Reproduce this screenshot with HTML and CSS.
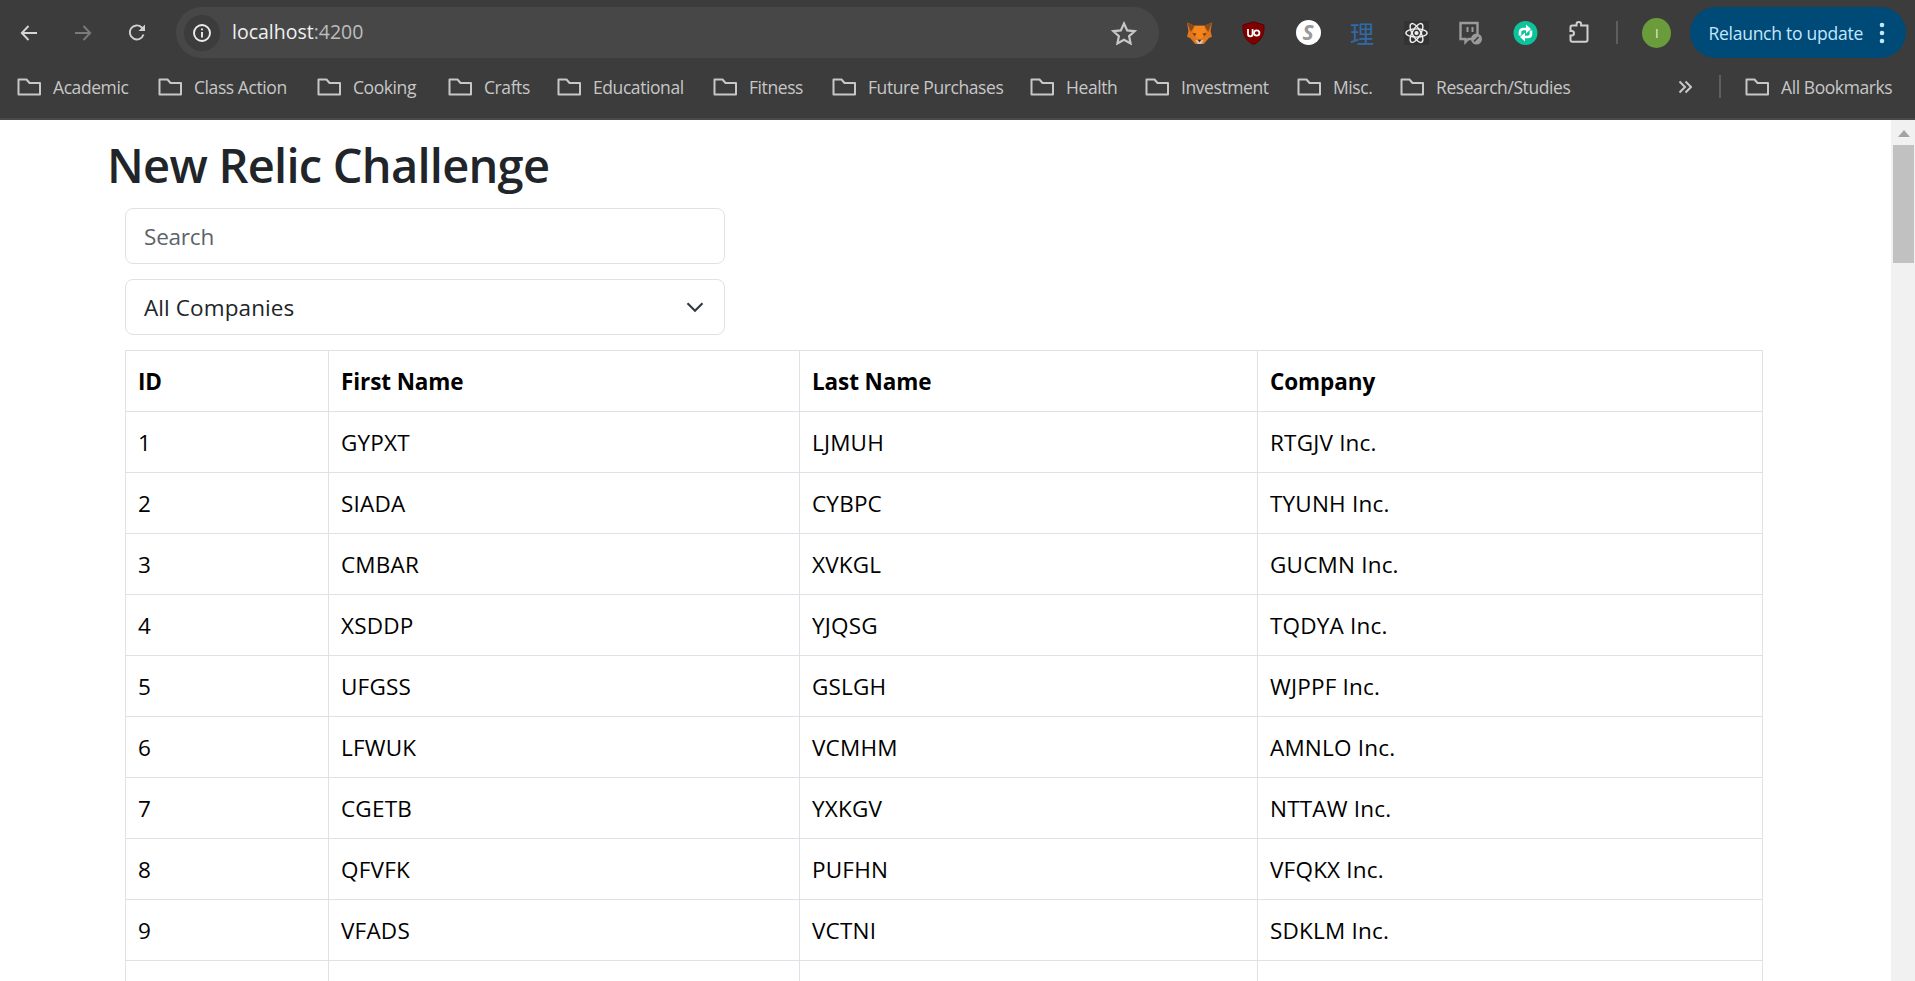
FILE: index.html
```html
<!DOCTYPE html>
<html lang="en">
<head>
<meta charset="utf-8">
<title>New Relic Challenge</title>
<link rel="stylesheet" href="styles.css">
</head>
<body>
<header class="chrome">
  <div class="toolbar">
    <svg class="nav nav-back" viewBox="0 0 20 20"><path d="M18 10H3M9.5 3 2.8 10l6.700 7"/></svg>
    <svg class="nav nav-fwd" viewBox="0 0 20 20"><path d="M2 10h15M10.500 3l6.700 7-6.700 7"/></svg>
    <svg class="nav nav-reload" viewBox="0 0 20 20"><path d="M16.500 11.500A7 7 0 1 1 14.800 4.500L17 7"/><path class="fill" d="M18 1.500V8h-6.500z"/></svg>
    <div class="omnibox">
      <div class="chip"><svg viewBox="0 0 20 20"><circle cx="10" cy="10" r="8"/><path d="M10 9v5.500M10 5.500v1.800"/></svg></div>
      <div class="url">localhost<span class="port">:4200</span></div>
      <svg class="star" viewBox="0 0 26 24"><path d="M13 2.500l3.200 6.900 7.300.8-5.400 5 1.500 7.300-6.600-3.700-6.600 3.700 1.500-7.300-5.400-5 7.300-.8z"/></svg>
    </div>
    <div class="exts">
      <svg class="ext" viewBox="0 0 26 24"><path fill="#e2761b" d="M0 1l8 3.500h10L26 1l-1.500 9 1.500 6-3.500 1.500-5 6h-9l-5-6L0 16l1.500-6z"/><path fill="#8a4a1c" d="M0 1l8 3.500L4 11zM26 1l-8 3.500 4 6.500z"/><path fill="#f6851b" d="M8 4.500h10l1.500 6.500-4 7h-5l-4-7z"/><path fill="#d7c1b3" d="M8.500 19l4.500 1 4.500-1-2.500 4.500h-4z"/><path fill="#233447" d="M11 19h4l-2 2.500z"/><path fill="#763d16" d="M5.500 12l4.500.5-2 3zM20.500 12l-4.500.5 2 3z"/></svg>
      <svg class="ext" viewBox="0 0 24 24"><path fill="#800000" stroke="#5c0000" d="M12 .8 22.500 4c.4 9-2 15.500-10.500 19.500C3.500 19.500 1.100 13 1.500 4z"/><path fill="none" stroke="#fff" stroke-width="1.800" d="M6.500 8v5a2.300 2.300 0 0 0 4.600 0V8"/><circle cx="15.200" cy="12" r="2.700" fill="none" stroke="#fff" stroke-width="1.800"/></svg>
      <div class="s-badge">S</div>
      <div class="li-glyph">理</div>
      <svg class="ext ext-react" viewBox="0 0 26 24"><g fill="none" stroke="#eee" stroke-width="1.500"><ellipse cx="13" cy="12" rx="11" ry="4.300"/><ellipse cx="13" cy="12" rx="11" ry="4.300" transform="rotate(60 13 12)"/><ellipse cx="13" cy="12" rx="11" ry="4.300" transform="rotate(120 13 12)"/></g><circle cx="13" cy="12" r="2.200" fill="#eee"/></svg>
      <svg class="ext" viewBox="0 0 24 24"><path fill="none" stroke="#9a9a9a" stroke-width="2.400" d="M2 2h17v12.500l-4 3.500h-5l-3 3v-3H2z"/><path stroke="#9a9a9a" stroke-width="2" d="M9 6v5M14 6v5"/><circle cx="18" cy="18" r="5.500" fill="#9a9a9a"/><path stroke="#3c3c3c" stroke-width="1.600" d="M15.500 20.500l4.500-4.500"/></svg>
      <svg class="ext" viewBox="0 0 24 24"><circle cx="12" cy="12" r="12" fill="#0dc39b"/><path fill="none" stroke="#fff" stroke-width="2.600" d="M6.500 14.500V11c0-2 1.500-3 3.500-3h3M17.500 9.500V13c0 2-1.500 3-3.500 3h-3"/><path fill="#fff" d="M12.500 3.500 17.500 8l-5 4.500zM11.500 11.500 6.500 16l5 4.500z"/></svg>
      <svg class="ext ext-puzzle" viewBox="0 0 24 24"><path d="M9 4.500V3.300a2.300 2.300 0 0 1 4.600 0v1.200H20v14.500c0 1-.7 1.700-1.700 1.700H4.700c-1 0-1.700-.7-1.700-1.700v-4.500h1.200a2.300 2.300 0 0 0 0-4.600H3V6.200c0-1 .7-1.700 1.700-1.700z"/></svg>
    </div>
    <span class="tool-sep"></span>
    <div class="avatar">I</div>
    <div class="relaunch"><span>Relaunch to update</span><svg viewBox="0 0 6 24"><circle cx="3" cy="4" r="2.300"/><circle cx="3" cy="12" r="2.300"/><circle cx="3" cy="20" r="2.300"/></svg></div>
  </div>
  <nav class="bookmarks">
    <a class="bm"><svg viewBox="0 0 24 18"><path d="M1.500 1.500h8l3 3.500h10.500v11.500h-21.500z"/></svg>Academic</a>
    <a class="bm"><svg viewBox="0 0 24 18"><path d="M1.500 1.500h8l3 3.500h10.500v11.500h-21.500z"/></svg>Class Action</a>
    <a class="bm"><svg viewBox="0 0 24 18"><path d="M1.500 1.500h8l3 3.500h10.500v11.500h-21.500z"/></svg>Cooking</a>
    <a class="bm"><svg viewBox="0 0 24 18"><path d="M1.500 1.500h8l3 3.500h10.500v11.500h-21.500z"/></svg>Crafts</a>
    <a class="bm"><svg viewBox="0 0 24 18"><path d="M1.500 1.500h8l3 3.500h10.500v11.500h-21.500z"/></svg>Educational</a>
    <a class="bm"><svg viewBox="0 0 24 18"><path d="M1.500 1.500h8l3 3.500h10.500v11.500h-21.500z"/></svg>Fitness</a>
    <a class="bm"><svg viewBox="0 0 24 18"><path d="M1.500 1.500h8l3 3.500h10.500v11.500h-21.500z"/></svg>Future Purchases</a>
    <a class="bm"><svg viewBox="0 0 24 18"><path d="M1.500 1.500h8l3 3.500h10.500v11.500h-21.500z"/></svg>Health</a>
    <a class="bm"><svg viewBox="0 0 24 18"><path d="M1.500 1.500h8l3 3.500h10.500v11.500h-21.500z"/></svg>Investment</a>
    <a class="bm"><svg viewBox="0 0 24 18"><path d="M1.500 1.500h8l3 3.500h10.500v11.500h-21.500z"/></svg>Misc.</a>
    <a class="bm"><svg viewBox="0 0 24 18"><path d="M1.500 1.500h8l3 3.500h10.500v11.500h-21.500z"/></svg>Research/Studies</a>
    <svg class="more" viewBox="0 0 14 14"><path d="M1.500 1.500 7 7l-5.500 5.500M7.500 1.500 13 7l-5.500 5.500"/></svg>
    <span class="bm-sep"></span>
    <a class="bm"><svg viewBox="0 0 24 18"><path d="M1.500 1.500h8l3 3.500h10.500v11.500h-21.500z"/></svg>All Bookmarks</a>
  </nav>
</header>
<div class="viewport">
  <main class="page">
    <h1 class="title">New Relic Challenge</h1>
    <div class="filters">
      <div class="field placeholder">Search</div>
      <div class="field select">All Companies<svg viewBox="0 0 16 16"><path d="M2 5l6 6 6-6"/></svg></div>
    </div>
    <table class="grid">
      <thead><tr><th class="c-id">ID</th><th class="c-first">First Name</th><th class="c-last">Last Name</th><th>Company</th></tr></thead>
      <tbody>
        <tr><td>1</td><td>GYPXT</td><td>LJMUH</td><td>RTGJV Inc.</td></tr>
        <tr><td>2</td><td>SIADA</td><td>CYBPC</td><td>TYUNH Inc.</td></tr>
        <tr><td>3</td><td>CMBAR</td><td>XVKGL</td><td>GUCMN Inc.</td></tr>
        <tr><td>4</td><td>XSDDP</td><td>YJQSG</td><td>TQDYA Inc.</td></tr>
        <tr><td>5</td><td>UFGSS</td><td>GSLGH</td><td>WJPPF Inc.</td></tr>
        <tr><td>6</td><td>LFWUK</td><td>VCMHM</td><td>AMNLO Inc.</td></tr>
        <tr><td>7</td><td>CGETB</td><td>YXKGV</td><td>NTTAW Inc.</td></tr>
        <tr><td>8</td><td>QFVFK</td><td>PUFHN</td><td>VFQKX Inc.</td></tr>
        <tr><td>9</td><td>VFADS</td><td>VCTNI</td><td>SDKLM Inc.</td></tr>
        <tr><td>&nbsp;</td><td>&nbsp;</td><td>&nbsp;</td><td>&nbsp;</td></tr>
      </tbody>
    </table>
  </main>
  <aside class="scrollbar">
    <svg class="arrow" viewBox="0 0 12 7"><path d="M6 0l6 7H0z"/></svg>
    <div class="thumb"></div>
  </aside>
</div>
</body>
</html>
```
FILE: styles.css
```css
* { box-sizing: border-box; }
html, body { margin: 0; height: 100%; overflow: hidden; }
body {
  display: flex;
  flex-direction: column;
  font-family: "Open Sans", "Noto Sans", "Liberation Sans", sans-serif;
  background: #fff;
}

/* browser chrome */
.chrome {
  flex: none;
  height: 120px;
  background: #3c3c3c;
  border-bottom: 2px solid #4a4a4a;
}
.toolbar {
  height: 65px;
  padding: 7px 8px 7px 19px;
  display: flex;
  align-items: flex-start;
}
.nav {
  flex: none;
  width: 20px;
  height: 20px;
  margin-top: 16px;
  fill: none;
  stroke: #d5d5d5;
  stroke-width: 1.9;
}
.nav-fwd { margin-left: 34px; stroke: #7a7a7a; }
.nav-reload { margin-left: 34px; stroke: #d0d0d0; }
.nav-reload .fill { fill: #d0d0d0; stroke: none; }

.omnibox {
  flex: none;
  width: 983px;
  height: 51px;
  margin-left: 29px;
  padding: 8px 22px 0 8px;
  background: #474747;
  border-radius: 26px;
  display: flex;
  align-items: flex-start;
}
.chip {
  flex: none;
  width: 36px;
  height: 36px;
  border-radius: 50%;
  background: #3c3c3c;
  display: flex;
  align-items: center;
  justify-content: center;
}
.chip svg { width: 20px; height: 20px; fill: none; stroke: #ececec; stroke-width: 1.9; }
.url {
  flex: 1;
  margin-left: 12px;
  margin-top: 4px;
  font-size: 19.5px;
  line-height: 26px;
  letter-spacing: 0;
  color: #f1f1f1;
}
.port { color: #bdbdbd; }
.star { flex: none; width: 26px; height: 24px; margin-top: 6px; fill: none; stroke: #c7c7c7; stroke-width: 2.2; }

.exts {
  flex: none;
  margin-left: 28px;
  margin-top: 13px;
  display: grid;
  grid-template-columns: repeat(8, 54.3px);
  align-items: center;
  justify-items: start;
}
.ext { display: block; width: 25px; height: 24px; }
.ext-react { background: #333; }
.ext-puzzle { fill: none; stroke: #d0d0d0; stroke-width: 2; }
.s-badge {
  width: 25px;
  height: 25px;
  border-radius: 50%;
  background: #fff;
  color: #9a9a9a;
  font: italic 700 21px/25px "Open Sans", sans-serif;
  text-align: center;
}
.li-glyph {
  font: 24px/25px "Noto Sans CJK SC", sans-serif;
  color: #2f6aa8;
}
.tool-sep { flex: none; width: 2px; height: 23px; margin: 14px 0 0 -5px; background: #5e5e5e; }
.avatar {
  flex: none;
  width: 29px;
  height: 30px;
  margin: 11px 0 0 24px;
  border-radius: 50%;
  background: #6a9c3b;
  color: #e6efd9;
  font-size: 13px;
  line-height: 30px;
  text-align: center;
}
.relaunch {
  flex: none;
  width: 216px;
  height: 51px;
  margin-left: 19px;
  padding: 0 21px 0 18px;
  border-radius: 26px;
  background: #004a77;
  color: #c2e7ff;
  display: flex;
  align-items: center;
  justify-content: space-between;
  font-size: 17.5px;
  letter-spacing: -.25px;
}
.relaunch svg { width: 6px; height: 24px; fill: #c2e7ff; }

.bookmarks {
  height: 53px;
  padding: 0 0 10px 17px;
  display: grid;
  grid-template-columns: 141px 159px 131px 109px 156px 119px 198px 115px 152px 103px 278px 41px 26px auto;
  align-items: center;
}
.bm {
  display: flex;
  align-items: center;
  gap: 12px;
  font-size: 17.5px;
  letter-spacing: -.42px;
  color: #c7c7c7;
  white-space: nowrap;
}
.bm svg { flex: none; width: 24px; height: 18px; fill: none; stroke: #c7c7c7; stroke-width: 2; stroke-linejoin: round; }
.more { width: 14px; height: 14px; fill: none; stroke: #c7c7c7; stroke-width: 2; }
.bm-sep { width: 2px; height: 23px; background: #5e5e5e; }

/* page */
.viewport { flex: 1; min-height: 0; display: flex; }
.page { flex: 1; min-width: 0; overflow: hidden; padding-left: 107px; }
.title {
  margin: 0;
  height: 88px;
  font-size: 47px;
  font-weight: 600;
  line-height: 90px;
  letter-spacing: -.75px;
  color: #212529;
}
.filters {
  margin-left: 18px;
  width: 600px;
  display: flex;
  flex-direction: column;
  gap: 15px;
}
.field {
  height: 56px;
  padding: 2px 18px 0;
  border: 1px solid #dee2e6;
  border-radius: 8px;
  font-size: 22.5px;
  letter-spacing: -.2px;
  line-height: 52px;
  color: #212529;
}
.placeholder { color: #5c636a; }
.select { display: flex; justify-content: space-between; align-items: center; letter-spacing: .1px; }
.select svg { width: 20px; height: 20px; margin: -2px 1.500px 0 0; fill: none; stroke: #343a40; stroke-width: 1.700; }

.grid {
  margin: 15px 0 0 18px;
  width: 1638px;
  table-layout: fixed;
  border-collapse: collapse;
  color: #000;
  font-size: 22.500px;
  letter-spacing: .2px;
}
.grid th, .grid td {
  height: 61px;
  padding: 1px 12px 0;
  border: 1px solid #dee2e6;
  text-align: left;
  line-height: 30px;
}
.grid th { font-weight: 700; letter-spacing: -.1px; }
.c-id { width: 203px; }
.c-first { width: 471px; }
.c-last { width: 458px; }

/* scrollbar */
.scrollbar {
  flex: none;
  width: 24px;
  background: #f1f1f1;
  padding: 10px 1px 0 2px;
}
.arrow { display: block; width: 12px; height: 7px; margin: 0 auto 8px; fill: #a3a3a3; }
.thumb { height: 118px; background: #c1c1c1; }
```
